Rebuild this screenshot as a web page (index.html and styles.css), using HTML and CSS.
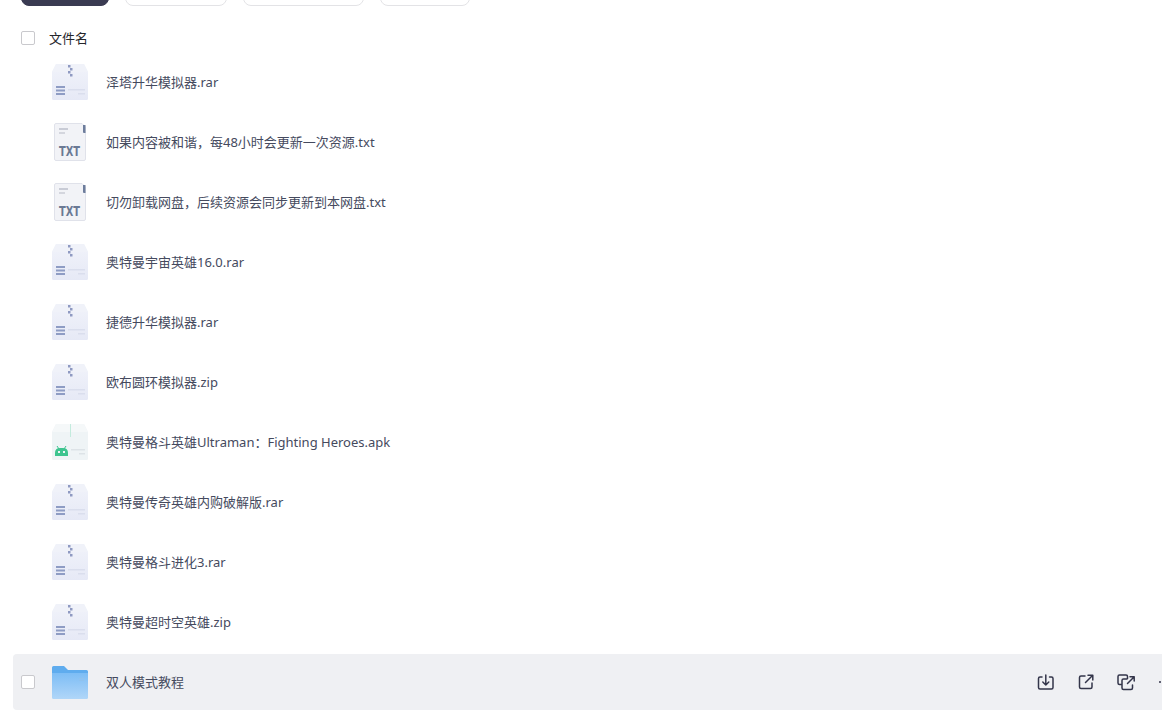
FILE: index.html
```html
<!DOCTYPE html>
<html lang="zh-CN">
<head>
  <meta charset="UTF-8" />
  <meta name="viewport" content="width=device-width, initial-scale=1.0" />
  <title>文件列表</title>
  <link rel="stylesheet" href="styles.css">
</head>
<body>
  <svg class="icon-defs" width="0" height="0">
    <defs>
      <linearGradient id="folder-front" x1="0" y1="0" x2="0" y2="1">
        <stop offset="0" stop-color="#7dbdf5" />
        <stop offset="1" stop-color="#b0d6f8" />
      </linearGradient>
      <linearGradient id="zip-body" x1="0" y1="0" x2="0" y2="1">
        <stop offset="0" stop-color="#f1f3fa" />
        <stop offset="1" stop-color="#e6e9f6" />
      </linearGradient>
      <symbol id="icon-zip" viewBox="0 0 36 36">
        <path d="M4 0H32L36 8V34.500Q36 36 34.500 36H1.500Q0 36 0 34.500V8Z" fill="url(#zip-body)" />
        <path d="M4 0H32L36 8H0Z" fill="#f0f2f9" />
        <path d="M16 1h2.500v2.500H16zM18 4h2.500v2.500H18zM16 7h2.500v2.500H16zM18 10h2.500v2.500H18z" fill="#8f9ac2" />
        <path d="M4 22h9v2H4zM4 25.500h9v2H4zM4 29h9v2H4z" fill="#8e9cc4" />
        <path d="M16 25h17v1.500H16zM26 29h7v1.500h-7z" fill="#dadeed" />
      </symbol>
      <symbol id="icon-txt" viewBox="0 0 32 38">
        <path d="M2 0.500H28L31.500 4V36Q31.500 37.500 30 37.500H2Q0.500 37.500 0.500 36V2Q0.500 0.500 2 0.500Z" fill="#f2f3f7" stroke="#e0e2ea" />
        <path d="M29 2h2.500v8H30q-1 0-1-1z" fill="#6d7d9c" />
        <path d="M5 5h9v2H5z" fill="#c9ccd6" />
        <path d="M5 9h6v2H5z" fill="#d4d6de" />
        <text x="5" y="33" textLength="21" lengthAdjust="spacingAndGlyphs" class="txt-label">TXT</text>
      </symbol>
      <symbol id="icon-apk" viewBox="0 0 36 36">
        <path d="M4 0H32L36 8V34.500Q36 36 34.500 36H1.500Q0 36 0 34.500V8Z" fill="#eff4f6" />
        <path d="M4 0H32L36 8H0Z" fill="#f5f8f9" />
        <path d="M18 0h1v13h-1z" fill="#c3ebdd" />
        <path d="M3 32v-3q0-5 5-5h3q5 0 5 5v3z" fill="#3ec48f" />
        <path d="M5 22l2 3M14 22l-2 3" stroke="#3ec48f" fill="none" />
        <path d="M6 27h2v2H6zM11 27h2v2h-2z" fill="#eff4f6" />
        <path d="M19 25h14v1.500H19zM27 29h6v1.500h-6z" fill="#dde3e7" />
      </symbol>
      <symbol id="icon-folder" viewBox="0 0 36 33">
        <path d="M0 1.500Q0 0 1.500 0H12L16 4H34.500Q36 4 36 5.500V12H0Z" fill="#5facee" />
        <path d="M0 7H36V31.500Q36 33 34.500 33H1.500Q0 33 0 31.500Z" fill="url(#folder-front)" />
        <path d="M27 12h5v1h-5zM27 14h5v1h-5z" fill="#8fc2ee" />
      </symbol>
    </defs>
  </svg>

  <div class="toolbar">
    <button class="tool-btn tool-btn-main"></button>
    <button class="tool-btn tool-btn-a"></button>
    <button class="tool-btn tool-btn-b"></button>
    <button class="tool-btn tool-btn-c"></button>
  </div>

  <div class="list-head">
    <span class="check"></span>
    <span class="head-name">文件名</span>
  </div>

  <div class="file-list">
    <div class="file-row">
      <span class="file-icon"><svg width="36" height="36"><use href="#icon-zip" /></svg></span>
      <span class="file-name">泽塔升华模拟器.rar</span>
    </div>
    <div class="file-row">
      <span class="file-icon"><svg width="32" height="38"><use href="#icon-txt" /></svg></span>
      <span class="file-name">如果内容被和谐，每48小时会更新一次资源.txt</span>
    </div>
    <div class="file-row">
      <span class="file-icon"><svg width="32" height="38"><use href="#icon-txt" /></svg></span>
      <span class="file-name">切勿卸载网盘，后续资源会同步更新到本网盘.txt</span>
    </div>
    <div class="file-row">
      <span class="file-icon"><svg width="36" height="36"><use href="#icon-zip" /></svg></span>
      <span class="file-name">奥特曼宇宙英雄16.0.rar</span>
    </div>
    <div class="file-row">
      <span class="file-icon"><svg width="36" height="36"><use href="#icon-zip" /></svg></span>
      <span class="file-name">捷德升华模拟器.rar</span>
    </div>
    <div class="file-row">
      <span class="file-icon"><svg width="36" height="36"><use href="#icon-zip" /></svg></span>
      <span class="file-name">欧布圆环模拟器.zip</span>
    </div>
    <div class="file-row">
      <span class="file-icon"><svg width="36" height="36"><use href="#icon-apk" /></svg></span>
      <span class="file-name">奥特曼格斗英雄Ultraman：Fighting Heroes.apk</span>
    </div>
    <div class="file-row">
      <span class="file-icon"><svg width="36" height="36"><use href="#icon-zip" /></svg></span>
      <span class="file-name">奥特曼传奇英雄内购破解版.rar</span>
    </div>
    <div class="file-row">
      <span class="file-icon"><svg width="36" height="36"><use href="#icon-zip" /></svg></span>
      <span class="file-name">奥特曼格斗进化3.rar</span>
    </div>
    <div class="file-row">
      <span class="file-icon"><svg width="36" height="36"><use href="#icon-zip" /></svg></span>
      <span class="file-name">奥特曼超时空英雄.zip</span>
    </div>
    <div class="file-row file-row-hover">
      <span class="check"></span>
      <span class="file-icon"><svg width="36" height="33"><use href="#icon-folder" /></svg></span>
      <span class="file-name">双人模式教程</span>
      <div class="row-actions">
        <svg class="action" width="20" height="20" viewBox="0 0 20 20"><path d="M6 5H4Q2.500 5 2.500 6.500V15.500Q2.500 17 4 17H15.500Q17 17 17 15.500V6.500Q17 5 15.500 5H13.500M9.800 3V13M6.800 10L9.800 13L12.800 10" /></svg>
        <svg class="action" width="20" height="20" viewBox="0 0 20 20"><path d="M9 4H5Q3.500 4 3.500 5.500V15Q3.500 16.500 5 16.500H14.500Q16 16.500 16 15V11M9.500 10.500L16.500 3.500M12 3.200H16.800V8" /></svg>
        <svg class="action" width="20" height="20" viewBox="0 0 20 20"><path d="M6 12.500H3.500Q2 12.500 2 11V4.500Q2 3 3.500 3H10Q11.500 3 11.500 4.500V6.500M11 7H7.500Q6 7 6 8.500V16Q6 17.500 7.500 17.500H15Q16.500 17.500 16.500 16V13M11.500 11.500L18 5M14 4.800H18.200V9" /></svg>
        <svg class="action action-more" width="20" height="20" viewBox="0 0 20 20"><circle cx="4" cy="10" r="1" /><circle cx="10" cy="10" r="1" /><circle cx="16" cy="10" r="1" /></svg>
      </div>
    </div>
  </div>
</body>
</html>
```

FILE: styles.css
```css
html, body { height: 100%; }
body { margin: 0; overflow: hidden; background: #fff; font-family: "Noto Sans", "Noto Sans CJK SC", sans-serif; font-size: 13px; color: #454a5e; }
.icon-defs { position: absolute; }
.txt-label { font-family: "DejaVu Sans", sans-serif; font-size: 13.500px; font-weight: 700; fill: #6a7994; }

.toolbar { display: flex; align-items: flex-end; height: 6px; overflow: hidden; padding-left: 21px; }
.tool-btn { flex: none; height: 34px; padding: 0; background: #fff; border: 1px solid #e3e3e6; border-radius: 8px; }
.tool-btn-main { width: 88px; margin-right: 16px; background: #3a3b52; border-color: #3a3b52; }
.tool-btn-a { width: 102px; margin-right: 16px; }
.tool-btn-b { width: 121px; margin-right: 16px; }
.tool-btn-c { width: 90px; }

.check { flex: none; box-sizing: border-box; width: 14px; height: 14px; border: 1px solid #c9c9cd; border-radius: 2px; background: #fff; }
.list-head { display: flex; align-items: center; height: 28px; margin-top: 18px; padding-left: 21px; }
.head-name { margin-left: 14px; margin-bottom: 2px; color: #25262b; }

.file-list { display: flex; flex-direction: column; gap: 4px; margin-right: -30px; padding-top: 2px; }
.file-row { display: flex; flex: none; align-items: center; height: 56px; margin-left: 13px; padding-left: 39px; }
.file-row-hover { padding-left: 8px; background: #eff0f3; border-radius: 4px; }
.file-icon { display: flex; flex: none; justify-content: center; width: 36px; margin-right: 18px; }
.file-row-hover .file-icon { margin-left: 17px; }
.file-name { margin-bottom: 2px; white-space: nowrap; }

.row-actions { display: flex; align-items: center; gap: 20px; margin-left: auto; padding-right: 16px; }
.action { fill: none; stroke: #33354a; stroke-width: 1.500; stroke-linecap: round; stroke-linejoin: round; }
.action-more { fill: #33354a; stroke: none; }
```
